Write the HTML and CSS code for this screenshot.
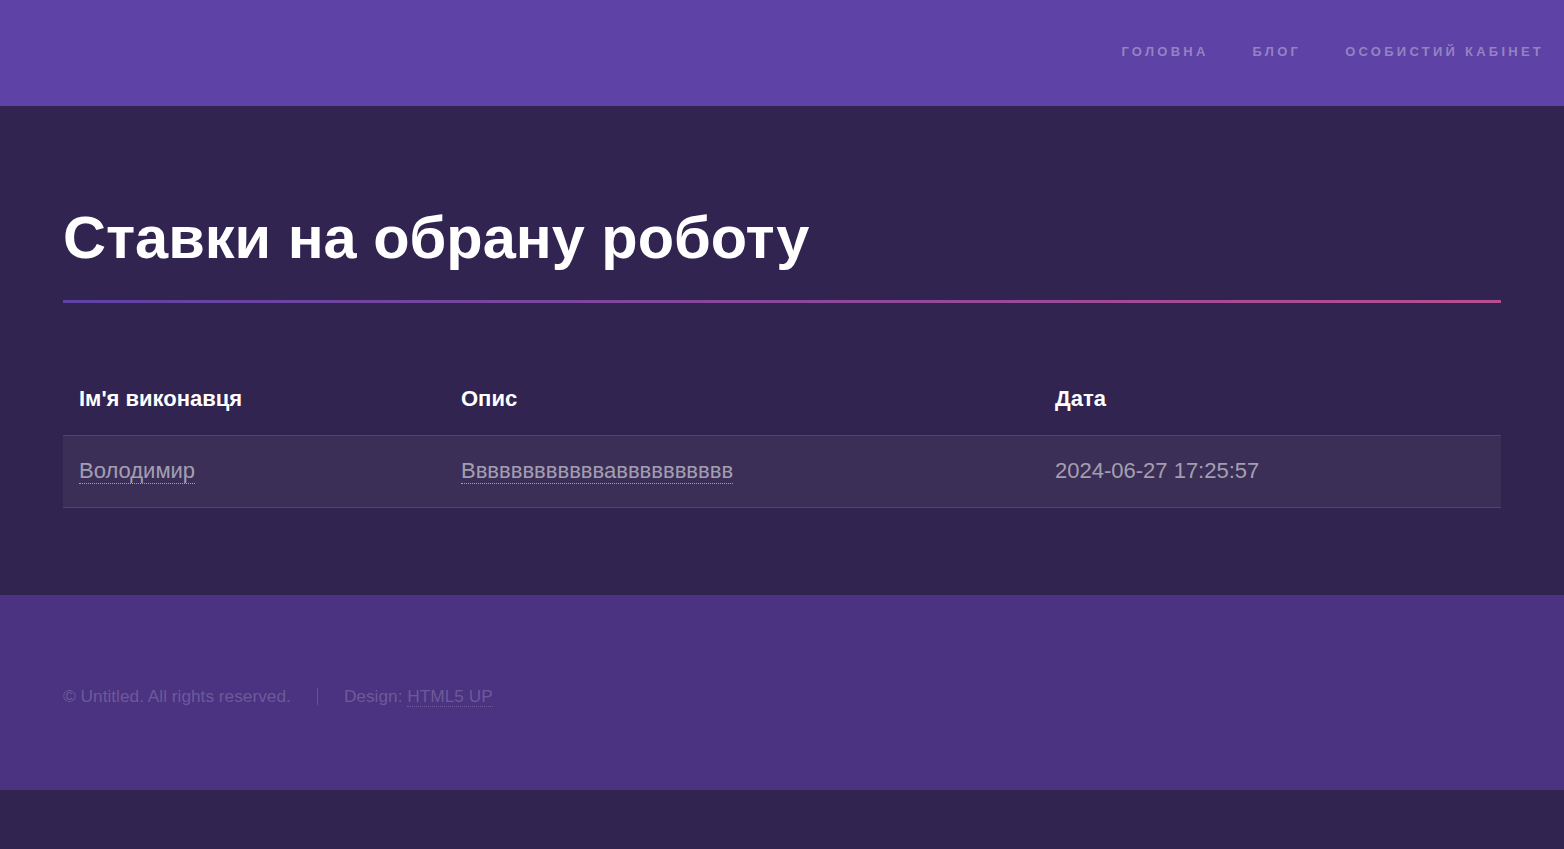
FILE: index.html
```html
<!DOCTYPE html>
<html lang="uk">
<head>
<meta charset="utf-8">
<title>Ставки на обрану роботу</title>
<link rel="stylesheet" href="styles.css">
</head>
<body>
<header class="site-header">
  <nav class="nav">
    <a href="#">Головна</a>
    <a href="#">Блог</a>
    <a href="#">Особистий кабінет</a>
  </nav>
</header>
<main class="main">
  <h1 class="title">Ставки на обрану роботу</h1>
  <div class="rule"></div>
  <table class="bids">
    <thead>
      <tr>
        <th class="c1">Ім'я виконавця</th>
        <th class="c2">Опис</th>
        <th class="c3">Дата</th>
      </tr>
    </thead>
    <tbody>
      <tr>
        <td><a href="#">Володимир</a></td>
        <td><a href="#">Ввввввввввввавввввввввв</a></td>
        <td>2024-06-27 17:25:57</td>
      </tr>
    </tbody>
  </table>
</main>
<footer class="site-footer">
  <ul class="menu">
    <li>© Untitled. All rights reserved.</li>
    <li class="sep">Design: <a href="#">HTML5 UP</a></li>
  </ul>
</footer>
</body>
</html>
```

FILE: styles.css
```css
* { box-sizing: border-box; }
html, body {
  margin: 0;
  padding: 0;
}
body {
  background: #312450;
  color: rgba(255,255,255,0.55);
  font-family: "Liberation Sans", Arial, Helvetica, sans-serif;
  font-size: 22px;
  line-height: 1.75;
}
a {
  color: inherit;
  text-decoration: none;
  border-bottom: 1px dotted;
}
.site-header {
  height: 106px;
  background: #5e42a6;
  display: flex;
  justify-content: flex-end;
  align-items: center;
  padding-right: 20px;
  padding-bottom: 3px;
}
.nav {
  display: flex;
  gap: 44px;
}
.nav a {
  border: 0;
  color: rgba(255,255,255,0.35);
  font-size: 13px;
  font-weight: bold;
  letter-spacing: 0.25em;
  text-transform: uppercase;
  line-height: 1;
}
.main {
  padding: 96px 63px 87px 63px;
}
.title {
  margin: 0 0 27px 0;
  color: #ffffff;
  font-size: 59.5px;
  line-height: 1.2;
  font-weight: bold;
}
.rule {
  height: 3px;
  background: linear-gradient(to right, #5e42a6, #b74e91);
  margin-bottom: 77px;
}
.bids {
  width: 100%;
  border-collapse: collapse;
}
.bids th {
  color: #ffffff;
  font-weight: bold;
  text-align: left;
  padding: 0 16px 16.5px 16px;
}
.bids th.c1 { width: 382px; }
.bids th.c2 { width: 594px; }
.bids td {
  padding: 16px;
}
.bids tbody tr {
  background: rgba(255,255,255,0.05);
  border-top: 1px solid rgba(255,255,255,0.15);
  border-bottom: 1px solid rgba(255,255,255,0.15);
}
.site-footer {
  height: 195px;
  background: #4b3382;
  display: flex;
  align-items: center;
  padding: 8px 63px 0 63px;
  color: rgba(255,255,255,0.2);
  font-size: 17.3px;
}
.menu {
  list-style: none;
  margin: 0;
  padding: 0;
  display: flex;
  line-height: 1;
}
.menu li.sep {
  border-left: 1px solid rgba(255,255,255,0.15);
  margin-left: 26px;
  padding-left: 26px;
}
```
